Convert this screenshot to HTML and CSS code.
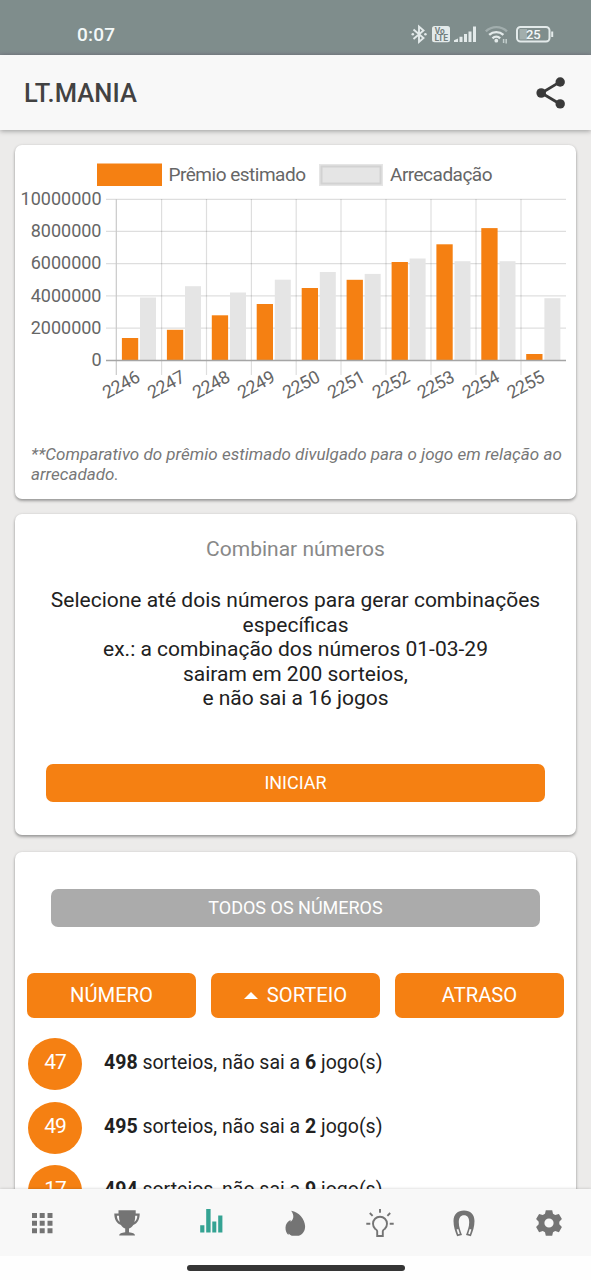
FILE: index.html
```
<!DOCTYPE html>
<html lang="pt-BR">
<head>
  <meta charset="UTF-8" />
  <meta name="viewport" content="width=device-width, initial-scale=1.0" />
  <title>LT.MANIA</title>
  <link rel="stylesheet" href="styles.css">
</head>
<body>
  <div class="status-bar">
    <span class="clock">0:07</span>
    <svg class="status-icons" width="145" height="24" viewBox="410 22 145 24">
      <!-- bluetooth -->
      <path d="M413.500 29.500l10 8.500-4.500 4V26.500l4.500 4-10 8.500" fill="none" stroke="#e3eaea" stroke-width="1.900"/>
      <circle cx="412.800" cy="34.200" r="1.300" fill="#e3eaea"/>
      <circle cx="425.400" cy="34.200" r="1.300" fill="#e3eaea"/>
      <!-- volte -->
      <rect x="432" y="26" width="18" height="16.300" rx="2.500" fill="#e3eaea"/>
      <text x="434.700" y="33.500" class="volte" textLength="10" lengthAdjust="spacingAndGlyphs">Vo</text>
      <text x="434.400" y="41" class="volte" textLength="13.800" lengthAdjust="spacingAndGlyphs">LTE</text>
      <!-- signal -->
      <path d="M454 42v-1.800l4-1.700V42zM459.500 42v-5.300h3V42zM464 42v-8h3v8zM468.500 42V31.500h3V42zM473 42V26.500h3V42z" fill="#e3eaea"/>
      <!-- wifi -->
      <g fill="none" stroke="#e3eaea" stroke-width="2.400">
        <path d="M485.800 31.300a15.500 15.500 0 0 1 21.200 0" opacity=".35"/>
        <path d="M489.200 34.900a10.500 10.500 0 0 1 14.200 0"/>
        <path d="M492.500 38.300a5.600 5.600 0 0 1 7.600 0"/>
      </g>
      <circle cx="496.300" cy="40.700" r="1.900" fill="#e3eaea"/>
      <path d="M503.600 43v-4M506.200 39v4.500" stroke="#c3cecd" stroke-width="1.500"/>
      <!-- battery -->
      <rect x="519.500" y="29" width="7.500" height="10.500" fill="#a2aeac"/>
      <rect x="517" y="26.900" width="32.500" height="14.600" rx="3.500" fill="none" stroke="#e3eaea" stroke-width="2"/>
      <path d="M552.200 31.500v5.500" stroke="#e3eaea" stroke-width="2"/>
      <text x="533.300" y="38.800" class="battery">25</text>
    </svg>
  </div>

  <div class="header">
    <h1>LT.MANIA</h1>
    <svg width="32" height="34" viewBox="535 75.500 32 34">
      <path d="M560 81.400L541.500 92.500L560 103.500" fill="none" stroke="#3a3a3a" stroke-width="2.800"/>
      <circle cx="541.200" cy="92.500" r="4.800" fill="#3a3a3a"/>
      <circle cx="560.200" cy="81.500" r="4.700" fill="#3a3a3a"/>
      <circle cx="560.200" cy="103.400" r="4.700" fill="#3a3a3a"/>
    </svg>
  </div>

  <div class="content">
    <div class="card chart-card">
      <svg class="chart" width="561" height="270" viewBox="15 145 561 270">
        <!-- legend -->
        <rect x="97" y="163.500" width="65" height="22.500" fill="#f58012"/>
        <text x="168.500" y="180.500" textLength="137.500">Prêmio estimado</text>
        <rect x="319" y="164" width="64" height="22" fill="#e5e5e5"/>
        <rect x="321.500" y="166.500" width="59" height="17" fill="#e5e5e5" stroke="#d2d2d2" stroke-width="2"/>
        <text x="390" y="180.500" textLength="102.500">Arrecadação</text>

        <!-- grid -->
        <path class="grid" d="M106 199.300H566M106 231.400H566M106 263.600H566M106 295.900H566M106 328.200H566"/>
        <path class="grid" d="M161.600 199V375M206.500 199V375M251.400 199V375M296.200 199V375M341 199V375M386 199V375M431 199V375M476 199V375M521 199V375"/>

        <g class="axis-y">
          <text x="101.500" y="204.800">10000000</text>
          <text x="101.500" y="237">8000000</text>
          <text x="101.500" y="269.200">6000000</text>
          <text x="101.500" y="301.500">4000000</text>
          <text x="101.500" y="333.700">2000000</text>
          <text x="101.500" y="366">0</text>
        </g>

        <!-- Arrecadação -->
        <g fill="#e5e5e5">
          <rect x="140" y="297.500" width="16" height="63"/>
          <rect x="185" y="286.200" width="16" height="74.300"/>
          <rect x="230" y="292.500" width="16" height="68"/>
          <rect x="274.800" y="279.700" width="16" height="80.800"/>
          <rect x="319.800" y="272" width="16" height="88.500"/>
          <rect x="364.700" y="273.900" width="16" height="86.600"/>
          <rect x="409.600" y="258.500" width="16" height="102"/>
          <rect x="454.500" y="261.200" width="16" height="99.300"/>
          <rect x="499.500" y="261.200" width="16" height="99.300"/>
          <rect x="544.400" y="298.200" width="16" height="62.300"/>
        </g>
        <!-- Prêmio estimado -->
        <g fill="#f58012">
          <rect x="121.900" y="338" width="16.300" height="22.500"/>
          <rect x="166.900" y="329.800" width="16.300" height="30.700"/>
          <rect x="211.800" y="315.300" width="16.300" height="45.200"/>
          <rect x="256.700" y="304" width="16.300" height="56.500"/>
          <rect x="301.700" y="288" width="16.300" height="72.500"/>
          <rect x="346.600" y="279.800" width="16.300" height="80.700"/>
          <rect x="391.600" y="262" width="16.300" height="98.500"/>
          <rect x="436.400" y="244.300" width="16.300" height="116.200"/>
          <rect x="481.300" y="228.100" width="16.300" height="132.400"/>
          <rect x="526.200" y="354" width="16.300" height="6.500"/>
        </g>

        <path d="M116.300 199V375" stroke="#c9c9c9" stroke-width="1.200"/>
        <path d="M106 360.500H566" stroke="#a5a5a5" stroke-width="1.300"/>

        <g class="axis-x">
          <text transform="translate(141 381) rotate(-28)">2246</text>
          <text transform="translate(186 381) rotate(-28)">2247</text>
          <text transform="translate(231 381) rotate(-28)">2248</text>
          <text transform="translate(276 381) rotate(-28)">2249</text>
          <text transform="translate(321 381) rotate(-28)">2250</text>
          <text transform="translate(366 381) rotate(-28)">2251</text>
          <text transform="translate(410.800 381) rotate(-28)">2252</text>
          <text transform="translate(455.700 381) rotate(-28)">2253</text>
          <text transform="translate(500.700 381) rotate(-28)">2254</text>
          <text transform="translate(545.600 381) rotate(-28)">2255</text>
        </g>
      </svg>
      <p class="note">**Comparativo do prêmio estimado divulgado para o jogo em relação ao arrecadado.</p>
    </div>

    <div class="card combine-card">
      <h2>Combinar números</h2>
      <p>Selecione até dois números para gerar combinações<br>específicas<br>ex.: a combinação dos números 01-03-29<br>sairam em 200 sorteios,<br>e não sai a 16 jogos</p>
      <button class="btn start">INICIAR</button>
    </div>

    <div class="card numbers-card">
      <button class="btn all">TODOS OS NÚMEROS</button>
      <div class="sort">
        <button class="btn">NÚMERO</button>
        <button class="btn"><svg width="14" height="8" viewBox="0 0 14 8"><path d="M0 8L7 1l7 7z" fill="#fff"/></svg>SORTEIO</button>
        <button class="btn">ATRASO</button>
      </div>
      <div class="row">
        <span class="ball">47</span>
        <span><b>498</b> sorteios, não sai a <b>6</b> jogo(s)</span>
      </div>
      <div class="row">
        <span class="ball">49</span>
        <span><b>495</b> sorteios, não sai a <b>2</b> jogo(s)</span>
      </div>
      <div class="row">
        <span class="ball">17</span>
        <span><b>494</b> sorteios, não sai a <b>9</b> jogo(s)</span>
      </div>
    </div>
  </div>

  <div class="nav">
    <a><svg viewBox="0 0 32 32"><path d="M6 6h5v5H6zM13.700 6h5v5h-5zM21.500 6h5v5h-5zM6 13.700h5v5H6zM13.700 13.700h5v5h-5zM21.500 13.700h5v5h-5zM6 21.300h5v5H6zM13.700 21.300h5v5h-5zM21.500 21.300h5v5h-5z"/></svg></a>
    <a><svg viewBox="0 0 32 32"><path fill-rule="evenodd" d="M7.500 3.200h17.200v3.300h4c0 6.500-2.300 9.800-6.400 11.500-1.300 1.900-2.500 3.100-4.300 3.600v3.700c3.500.5 6 1.300 6 3.300H8.200c0-2 2.500-2.800 6-3.300v-3.700c-1.800-.5-3-1.700-4.300-3.600-4.100-1.700-6.600-5-6.600-11.500h4.200zM8 8.700H5.900c.1 2.700.9 4.800 2.900 6.200C8.200 13 8 11 8 8.700zm16.200 0c0 2.300-.2 4.300-.8 6.200 2-1.400 2.800-3.500 2.900-6.200z"/></svg></a>
    <a class="active"><svg viewBox="0 0 32 32"><path d="M5.200 18.200h4.200v7.300H5.200zM11.200 2h4.400v23.500h-4.400zM17.300 14.500h4v11h-4zM23.200 8.500h4.200v17h-4.200z"/></svg></a>
    <a><svg viewBox="0 0 32 32"><path d="M12.200 3.700c7.800 1.200 13.600 8.300 13.900 15.300.2 4.800-2.600 8.800-6.400 9.800h-6.900c-1.400-.5-2.400-1.200-3.100-2.200l-.3 1.500c-2-1.800-3-4.500-2.900-7.500.1-4 2.200-6 5-7.600l.2 1.700c2.900-2.400 3.900-6 .5-11z"/></svg></a>
    <a><svg viewBox="0 0 32 32"><path d="M13.200 29v-4.800c-.2-1.100-.9-1.500-2.100-2.500a7 7 0 1 1 9.800 0c-1.200 1-1.900 1.400-2.100 2.500V29zM16 2v3.800M5.800 6l2.800 2.800M26.200 6l-2.800 2.800M2.300 16.700h4M25.700 16.700h4" fill="none" stroke="#747474" stroke-width="1.900"/></svg></a>
    <a><svg viewBox="0 0 32 32"><path fill-rule="evenodd" d="M16 3.500c6.300 0 10.500 4 10.500 10.500 0 5.500-1.700 10.500-3.600 15.200L18 27.900c1.500-4 3.200-8 3.200-12.700 0-4.500-1.900-7-5.200-7s-5.200 2.500-5.200 7c0 4.700 1.700 8.700 3.200 12.700l-4.900 1.300C7.200 24.500 5.500 19.500 5.500 14 5.500 7.500 9.700 3.500 16 3.500zM8.600 22.500l1.500 4.700 1.700-.5-1.500-4.700zM23.400 22.500l-1.700-.5-1.500 4.700 1.700.5z"/></svg></a>
    <a><svg viewBox="0 0 32 32"><path fill-rule="evenodd" d="M12.800 3.300h6.400l.8 3.500 2.200 1.300 3.700-1.200 3 5.200-2.600 2.700v2.500l2.600 2.700-3 5.200-3.700-1.200-2.200 1.300-.8 3.500h-6.400l-.8-3.500L9.800 24l-3.700 1.200-3-5.200 2.600-2.700v-2.500l-2.600-2.700 3-5.200 3.700 1.200L12 6.800zM16 11.400a4.600 4.600 0 1 0 0 9.200 4.600 4.600 0 0 0 0-9.200z"/></svg></a>
  </div>
  <div class="home-bar"><span></span></div>
</body>
</html>
```

FILE: styles.css
```
* {
  box-sizing: border-box;
}

body {
  margin: 0;
  height: 1280px;
  display: flex;
  flex-direction: column;
  overflow: hidden;
  font-family: Roboto, sans-serif;
  background: #ecebea;
  color: #212121;
}

.status-bar {
  height: 55px;
  flex-shrink: 0;
  display: flex;
  justify-content: space-between;
  align-items: flex-start;
  padding: 22px 36px 0 77px;
  background: linear-gradient(#7f8d8c 50px, #82898f);
}

.clock {
  color: #f3f8f8;
  font-size: 19px;
  font-weight: 500;
  line-height: 25px;
  letter-spacing: 0.2px;
}

.volte {
  font-size: 8.5px;
  font-weight: 700;
  fill: #74807f;
}

.battery {
  font-size: 13px;
  font-weight: 500;
  fill: #f3f8f8;
  text-anchor: middle;
}

.header {
  height: 75px;
  flex-shrink: 0;
  display: flex;
  justify-content: space-between;
  align-items: center;
  padding: 0 24px;
  background: #f8f8f8;
  box-shadow: 0 1px 5px rgba(0,0,0,0.35);
  z-index: 1;
}

.header h1 {
  margin: 0;
  font-size: 25.5px;
  font-weight: 500;
  letter-spacing: 0.1px;
  color: #424242;
}

.content {
  flex: 1;
  min-height: 0;
  overflow: hidden;
  padding: 15px 15px 0 15px;
}

.card {
  background: white;
  border-radius: 7px;
  box-shadow: 0 2px 3px rgba(0,0,0,0.32), 0 0 3px rgba(0,0,0,0.1);
}

.chart-card {
  height: 354px;
  margin-bottom: 15px;
}

.chart {
  display: block;
  font-size: 19px;
  fill: #666;
}

.grid {
  stroke: rgba(0,0,0,0.13);
  stroke-width: 1.2;
}

.axis-y text, .axis-x text {
  text-anchor: end;
  font-size: 18px;
}

.axis-x text {
  letter-spacing: -0.4px;
}

.note {
  margin: 0;
  padding: 30px 8px 0 16px;
  font-size: 17px;
  font-style: italic;
  line-height: 19.5px;
  letter-spacing: 0.02px;
  color: #777;
}

.combine-card {
  height: 321px;
  margin-bottom: 17px;
  padding: 22px 31px 0;
  text-align: center;
}

.combine-card h2 {
  margin: 0;
  font-size: 21px;
  font-weight: 400;
  line-height: 26px;
  color: #888;
}

.combine-card p {
  margin: 26px -20px 53px;
  font-size: 21px;
  line-height: 24.6px;
}

.btn {
  display: flex;
  align-items: center;
  justify-content: center;
  border: none;
  border-radius: 7px;
  padding: 0 0 1px;
  font-family: inherit;
  color: white;
  background: #f58012;
}

.start, .all {
  width: 100%;
  height: 38px;
  font-size: 18px;
}

.numbers-card {
  height: 420px;
  padding: 37px 12px 0 12px;
}

.all {
  width: 489px;
  margin: 0 auto 46px 24px;
  background: #ababab;
}

.sort {
  display: grid;
  grid-template-columns: repeat(3, 1fr);
  gap: 15px;
  margin-bottom: 20px;
}

.sort .btn {
  height: 45px;
  gap: 9px;
  font-size: 20.2px;
}

.row {
  display: flex;
  align-items: flex-start;
  gap: 22px;
  height: 63.5px;
  padding-left: 1px;
  font-size: 19.5px;
  line-height: 49px;
}

.ball {
  width: 54px;
  height: 52px;
  border-radius: 50%;
  background: #f58012;
  color: white;
  font-size: 21px;
  letter-spacing: -1px;
  text-align: center;
}

.nav {
  height: 67px;
  flex-shrink: 0;
  display: flex;
  padding-top: 1px;
  background: #f8f8f8;
  box-shadow: 0 0 3px rgba(0,0,0,0.2);
  z-index: 1;
}

.nav a {
  flex: 1;
  display: flex;
  align-items: center;
  justify-content: center;
}

.nav svg {
  width: 32px;
  height: 32px;
  fill: #747474;
}

.nav .active svg {
  fill: #35a393;
}

.home-bar {
  height: 24px;
  flex-shrink: 0;
  display: flex;
  align-items: center;
  justify-content: center;
  background: #fefefe;
  z-index: 1;
}

.home-bar span {
  width: 218px;
  height: 6px;
  border-radius: 3px;
  background: #353535;
}
```
